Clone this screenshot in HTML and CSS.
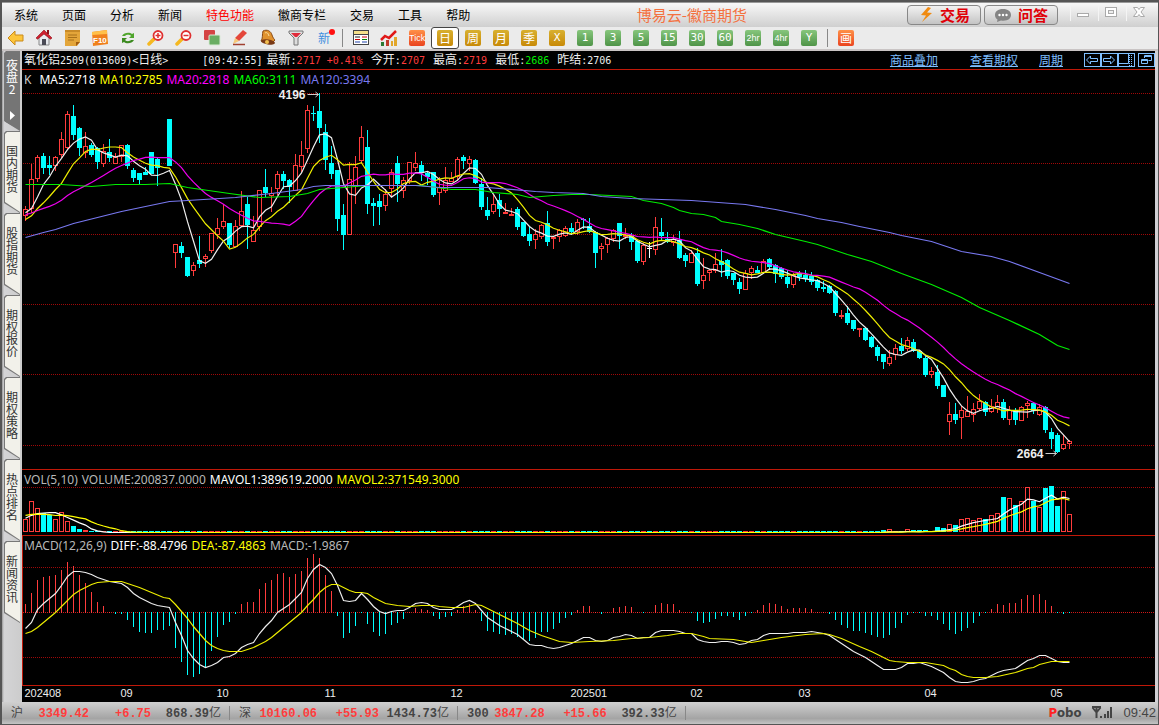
FILE: index.html
```html
<!DOCTYPE html>
<html lang="zh-CN">
    <head>
        <meta charset="utf-8">
        <title>博易云-徽商期货</title>
        <link rel="stylesheet" href="styles.css">
    </head>
    <body>
        <header class="titlebar">
            <nav class="menu">
                <button>系统</button>
                <button>页面</button>
                <button>分析</button>
                <button>新闻</button>
                <button class="hot">特色功能</button>
                <button>徽商专栏</button>
                <button>交易</button>
                <button>工具</button>
                <button>帮助</button>
            </nav>
            <h1>博易云-徽商期货</h1>
            <div class="title-right">
                <button class="pill">
                    <svg width="16" height="16" viewBox="0 0 16 16"><path d="M10 0L3 8l5 0.5L4 15l10-9-5-0.5L13 1z" fill="#f08a10"/></svg>
                    交易
                </button>
                <button class="pill">
                    <svg width="18" height="16" viewBox="0 0 18 16"><path d="M9 2C4 2 1 4.500 1 8c0 2 1 3.500 2.500 4.500L3 15l4-1.500c6 1 10-1.500 10-5.500 0-3.500-3-6-8-6z" fill="#858585"/><circle cx="5.500" cy="8" r="1.200" fill="#fff"/><circle cx="9" cy="8" r="1.200" fill="#fff"/><circle cx="12.500" cy="8" r="1.200" fill="#fff"/></svg>
                    问答
                </button>
                <button class="win" aria-label="最小化"><svg width="14" height="14"><rect x="1.500" y="8.500" width="11" height="3" fill="#fff" stroke="#aaa"/></svg></button>
                <button class="win" aria-label="最大化"><svg width="14" height="14"><rect x="1.500" y="2.500" width="11" height="9" fill="#fff" stroke="#aaa"/><rect x="4.500" y="5.500" width="5" height="3" fill="#eee" stroke="#aaa"/></svg></button>
                <button class="win" aria-label="关闭"><svg width="14" height="14"><path d="M1.500 2.500h4l1.500 2 1.500-2h4L9 7l3.500 4.500h-4L7 9.500l-1.500 2h-4L5 7z" fill="#fff" stroke="#aaa"/></svg></button>
            </div>
        </header>

        <div class="toolbar">
            <button aria-label="后退"><svg width="18" height="18" viewBox="0 0 18 18"><path d="M1 9l7-7v4h8v6H8v4z" fill="#fdc53a" stroke="#c98a1a"/></svg></button>
            <button aria-label="首页"><svg width="18" height="18" viewBox="0 0 18 18"><path d="M4 8v8h10V8L9 4z" fill="#e8eaee" stroke="#888"/><path d="M1 9L9 1l8 8-1.500 1.200L9 5l-6.500 5.200z" fill="#cf2030" stroke="#8f1018" stroke-width=".6"/><rect x="7" y="10" width="4" height="6" fill="#4a4a55"/><rect x="12" y="1" width="2" height="4" fill="#8f1018"/></svg></button>
            <button aria-label="公告"><svg width="18" height="18" viewBox="0 0 18 18"><path d="M2 1h15v12l-3 4H2z" fill="#e3a53a"/><path d="M2 2h15" stroke="#c88a28" stroke-width="2"/><path d="M5 6h9M5 8.500h9M5 11h6" stroke="#a8701a"/><path d="M13 17l4-4h-4z" fill="#a05c10"/></svg></button>
            <button aria-label="F10"><svg width="18" height="18" viewBox="0 0 18 18"><path d="M1 3l15-2 1 14-15 2z" fill="#f0801c"/><path d="M1 3l15-2v4L1 6z" fill="#ffc04a"/><text x="2" y="14" class="f10">F10</text></svg></button>
            <button aria-label="刷新"><svg width="18" height="18" viewBox="0 0 18 18"><path d="M3 7c2-4 8-4 10-2l2-1v5h-5l2-2c-2-2-5-1-6 0z" fill="#4fa52c"/><path d="M15 11c-2 4-8 4-10 2l-2 1V9h5l-2 2c2 2 5 1 6 0z" fill="#3c8a20"/></svg></button>
            <button aria-label="放大"><svg width="18" height="18" viewBox="0 0 18 18"><path d="M7 10l-5 5" stroke="#f5b820" stroke-width="3.500" stroke-linecap="round"/><circle cx="11" cy="6.500" r="4.500" fill="#fff" stroke="#df3030" stroke-width="1.800"/><path d="M8.500 6.500h5M11 4v5" stroke="#df3030" stroke-width="1.500"/></svg></button>
            <button aria-label="缩小"><svg width="18" height="18" viewBox="0 0 18 18"><path d="M7 10l-5 5" stroke="#f5b820" stroke-width="3.500" stroke-linecap="round"/><circle cx="11" cy="6.500" r="4.500" fill="#fff" stroke="#df3030" stroke-width="1.800"/><path d="M8.500 6.500h5" stroke="#df3030" stroke-width="1.500"/></svg></button>
            <button aria-label="叠加"><svg width="18" height="18" viewBox="0 0 18 18"><rect x="1" y="1" width="11" height="10" rx="1" fill="#d44444"/><rect x="6" y="6" width="11" height="10" rx="1" fill="#69ad62" stroke="#d8ead5"/></svg></button>
            <button aria-label="画线"><svg width="18" height="18" viewBox="0 0 18 18"><path d="M12 1l4 3-8 8-4-3z" fill="#e4463a"/><path d="M4 9l4 3-6 3z" fill="#f6c878"/><path d="M2 15.500h12" stroke="#a04030" stroke-width="1.500"/></svg></button>
            <button aria-label="预警"><svg width="18" height="18" viewBox="0 0 18 18"><path d="M4 2c4-2 8 0 9 4 1 3 2 4 3 5l-3 3L2 12c2-2 1-7 2-10z" fill="#e0922e" stroke="#8a4a14"/><ellipse cx="9" cy="13" rx="7" ry="2.500" transform="rotate(8 9 13)" fill="#7a3a16"/><circle cx="8" cy="13" r="2" fill="#f4c050"/><path d="M6 4c2-1 3 0 4 3" stroke="#fbe0a0" fill="none"/></svg></button>
            <button aria-label="筛选"><svg width="18" height="18" viewBox="0 0 18 18"><path d="M2 2h14v2l-5 5v7H7V9L2 4z" fill="#ddd" stroke="#777"/><path d="M4 4h10l-4 4H8z" fill="#e02a3a"/></svg></button>
            <button class="new">新<i></i></button>
            <span class="sep"></span>
            <button aria-label="报价表"><svg width="18" height="18" viewBox="0 0 18 18"><rect x="1.500" y="1.500" width="15" height="14" fill="#fff" stroke="#444"/><rect x="2" y="2" width="14" height="3" fill="#f5e08a"/><path d="M1 5.500h16" stroke="#444"/><path d="M3 8h5" stroke="#222"/><path d="M10 8h5" stroke="#c00"/><path d="M3 10.500h5" stroke="#c00"/><path d="M10 10.500h5" stroke="#080"/><path d="M3 13h5M10 13h5" stroke="#24a"/></svg></button>
            <button aria-label="走势图"><svg width="18" height="18" viewBox="0 0 18 18"><path d="M1 13h3v4H1z" fill="#2c7a34"/><path d="M6 11h3v6H6z" fill="#c03a2a"/><path d="M11 12h2v5h-2zM14 8h3v9h-3z" fill="#e2a72c"/><path d="M1 11l4-4 4 2 7-7" stroke="#e01818" stroke-width="2.500" fill="none"/></svg></button>
            <button><span class="chip orange small">Tick</span></button>
            <button class="on"><span class="chip gold">日</span></button>
            <button><span class="chip gold">周</span></button>
            <button><span class="chip gold">月</span></button>
            <button><span class="chip gold">季</span></button>
            <button><span class="chip gold num">X</span></button>
            <button><span class="chip green num">1</span></button>
            <button><span class="chip green num">3</span></button>
            <button><span class="chip green num">5</span></button>
            <button><span class="chip green num">15</span></button>
            <button><span class="chip green num">30</span></button>
            <button><span class="chip green num">60</span></button>
            <button><span class="chip green small">2hr</span></button>
            <button><span class="chip green small">4hr</span></button>
            <button><span class="chip green num">Y</span></button>
            <span class="sep"></span>
            <button><span class="chip orange">画</span></button>
        </div>

        <div class="main">
            <nav class="tabs">
                <button class="tab active"><span>夜盘2</span><svg width="5" height="9"><path d="M0 0l5 4.500L0 9z" fill="#fff"/></svg></button>
                <button class="tab"><span>国内期货</span></button>
                <button class="tab"><span>股指期货</span></button>
                <button class="tab"><span>期权报价</span></button>
                <button class="tab"><span>期权策略</span></button>
                <button class="tab"><span>热点排名</span></button>
                <button class="tab"><span>新闻资讯</span></button>
            </nav>

            <main class="panel">
                <div class="quote">
                    <span class="name">氧化铝<b>2509(013609)&lt;</b>日线<b>&gt;</b></span>
                    <span><b>[09:42:55]</b></span>
                    <span>最新<b>:</b><b class="up">2717 +0.41%</b></span>
                    <span>今开<b>:</b><b class="up">2707</b></span>
                    <span>最高<b>:</b><b class="up">2719</b></span>
                    <span>最低<b>:</b><b class="down">2686</b></span>
                    <span>昨结<b>:</b><b>2706</b></span>
                    <div class="links">
                        <a href="#overlay">商品叠加</a>
                        <a href="#options">查看期权</a>
                        <a href="#period">周期</a>
                        <div class="tools">
                            <button aria-label="向左"><svg width="14" height="12"><path d="M1.500 6l4-4v2.500h7v3h-7V10z"/></svg></button>
                            <button aria-label="向右"><svg width="14" height="12"><path d="M12.500 6l-4-4v2.500h-7v3h7V10z"/></svg></button>
                            <button aria-label="侧栏"><svg width="14" height="12"><path d="M0 9.500h9.500V0"/><path d="M12.500 1v11M10.500 1v11" stroke-dasharray="1 1"/></svg></button>
                            <button class="restore" aria-label="还原"><svg width="14" height="12"><path d="M5.500 4V1.500h7v5h-3M5 2.500h8"/><path d="M2.500 5.500h6v4h-6zM2 6.500h7"/></svg></button>
                        </div>
                    </div>
                </div>

                <section class="pane">
                    <div class="legend">
                        <span class="c-k">K</span>
                        <span class="c-white">MA5:2718</span>
                        <span class="c-yellow">MA10:2785</span>
                        <span class="c-magenta">MA20:2818</span>
                        <span class="c-green">MA60:3111</span>
                        <span class="c-blue">MA120:3394</span>
                    </div>
                    <svg id="price" class="chart price"></svg>
                </section>
                <section class="pane">
                    <div class="legend vol">
                        <span class="c-grey">VOL(5,10)</span>
                        <span class="c-grey">VOLUME:200837.0000</span>
                        <span class="c-white">MAVOL1:389619.2000</span>
                        <span class="c-yellow">MAVOL2:371549.3000</span>
                    </div>
                    <svg id="volume" class="chart volume"></svg>
                </section>
                <section class="pane selected">
                    <div class="legend">
                        <span class="c-grey">MACD(12,26,9)</span>
                        <span class="c-white">DIFF:-88.4796</span>
                        <span class="c-yellow">DEA:-87.4863</span>
                        <span class="c-grey">MACD:-1.9867</span>
                    </div>
                    <svg id="macd" class="chart macd"></svg>
                </section>
                <svg id="axis" class="axis"></svg>
            </main>
        </div>

        <footer class="status">
            <div class="index">
                <span>沪</span><b class="up last">3349.42</b><b class="up diff">+6.75</b><b class="amount">868.39<i>亿</i></b>
            </div>
            <div class="index">
                <span>深</span><b class="up last">10160.06</b><b class="up diff">+55.93</b><b class="amount">1434.73<i>亿</i></b>
            </div>
            <div class="index">
                <b>300</b><b class="up last">3847.28</b><b class="up diff">+15.66</b><b class="amount">392.33<i>亿</i></b>
            </div>
            <div class="conn">
                <strong><em>P</em>obo</strong>
                <svg width="22" height="14"><path d="M1 1h9M1.500 1.500l4 5 4-5M5.500 1v11" fill="none" stroke="#444" stroke-width="2"/><path d="M9 10h2v2H9zM13 8h2v4h-2zM16 5h2v7h-2zM19 1h2v11h-2z" fill="#444"/></svg>
                <time>09:42</time>
            </div>
        </footer>
        <script src="chart.js"></script>
    </body>
</html>
```
FILE: styles.css
```css
:root {
    --line: #c01808;
    --up: #ff3c3c;
    --down: #00ffff;
    --link: #7fbfff;
}
* {
    box-sizing: border-box;
}
body {
    margin: 0;
    min-height: 100vh;
    display: flex;
    flex-direction: column;
    border: 2px solid #555;
    border-width: 2px 1px 2px 2px;
    background: #d0d0d4;
    font: 12px/16px "Liberation Sans", "Noto Sans CJK SC", sans-serif;
    color: #000;
}
button {
    border: 0;
    padding: 0;
    background: none;
    font: inherit;
    color: inherit;
}
svg {
    display: block;
    flex: none;
}

/* title bar */
.titlebar {
    display: flex;
    align-items: center;
    height: 25px;
    border-top: 1px solid #999;
    background: linear-gradient(#f8f8f8, #cfcfcf);
}
.menu {
    display: flex;
    flex: 1;
    gap: 24px;
    padding-left: 12px;
    font-family: "Noto Sans CJK SC", sans-serif;
    white-space: nowrap;
}
.menu .hot {
    color: #f00;
}
.titlebar h1 {
    margin: 0;
    font: 15px/20px "Noto Sans CJK SC", sans-serif;
    color: #f4713f;
    white-space: nowrap;
}
.title-right {
    display: flex;
    gap: 3px;
    padding-left: 160px;
    padding-right: 7px;
}
.pill {
    display: flex;
    align-items: center;
    justify-content: center;
    gap: 6px;
    width: 74px;
    height: 20px;
    border: 1px solid #888;
    border-radius: 4px;
    background: linear-gradient(#f2f2f2, #c4c4c4);
    font: bold 15px/18px "Noto Sans CJK SC", sans-serif;
    color: #e00008;
    white-space: nowrap;
}
.win {
    width: 25px;
    height: 16px;
    display: flex;
    justify-content: center;
    border-left: 1px solid #f4f4f4;
}
.pill + .win {
    margin-left: 9px;
}

/* toolbar */
.toolbar {
    display: flex;
    align-items: center;
    height: 22px;
    background: #ebebeb;
}
.toolbar button {
    width: 28px;
    height: 22px;
    display: flex;
    align-items: center;
    justify-content: center;
}
.toolbar .on {
    border: 1px solid #444;
    border-radius: 3px;
    background: #fff;
}
.sep {
    width: 1px;
    height: 18px;
    margin: 0 4px;
    background: #888;
}
.new {
    position: relative;
    font-family: "Noto Sans CJK SC", sans-serif;
    color: #3f8fe0;
}
.new i {
    position: absolute;
    right: 3px;
    top: 2px;
    width: 6px;
    height: 6px;
    border-radius: 50%;
    background: #ff1010;
}
.f10 {
    font: bold 8px "Liberation Sans", sans-serif;
    fill: #fff;
}
.chip {
    width: 16px;
    height: 16px;
    border-radius: 2px;
    font: 12px/16px "Noto Sans CJK SC", sans-serif;
    color: #fff;
    text-align: center;
}
.chip.num {
    font: 11px/16px "DejaVu Sans Mono", monospace;
}
.chip.small {
    font: 9px/16px "Liberation Sans", sans-serif;
}
.gold {
    background: linear-gradient(#d8b030, #c88a08);
}
.green {
    background: linear-gradient(#86c67c, #4f9448);
}
.orange {
    background: linear-gradient(#ff9048, #ea4420);
}

/* side tabs */
.main {
    flex: 1;
    display: flex;
    border-top: 2px solid #c9c4c4;
}
.tabs {
    width: 20px;
    padding-left: 2px;
    padding-right: 2px;
    display: flex;
    flex-direction: column;
    background: linear-gradient(90deg, #999, #d4d4d6 2px, #ccc);
}
.tab {
    position: relative;
    z-index: 0;
    height: 82px;
    padding-top: 14px;
    display: flex;
    flex-direction: column;
    align-items: center;
    background: #777;
    clip-path: polygon(0 2px, 2px 0, 100% 0, 100% 100%, 0 72px);
    font: 12px/12px "Noto Sans CJK SC", sans-serif;
    color: #333;
}
.tab::before {
    content: "";
    position: absolute;
    z-index: -1;
    inset: 1px 0 1px 1px;
    background: #f2f1ea;
    clip-path: polygon(0 2px, 2px 0, 100% 0, 100% 100%, 0 70px);
}
.tab span {
    width: 12px;
    word-break: break-all;
}
.tab.active {
    height: 80px;
    padding-top: 8px;
    gap: 16px;
    color: #fff;
    clip-path: polygon(0 2px, 2px 0, 100% 0, 100% 100%, 0 70px);
}
.tab.active::before {
    background: #757575;
}

/* chart panel */
.panel {
    flex: 1;
    min-width: 0;
    margin-right: 3px;
    background: #000;
    color: #eee;
}
.quote {
    display: flex;
    align-items: center;
    gap: 8px;
    height: 19px;
    padding-left: 2px;
    border-bottom: 1px solid var(--line);
    font-family: "Noto Sans CJK SC", sans-serif;
    white-space: nowrap;
}
.quote b {
    font: 10px/16px "DejaVu Sans Mono", monospace;
}
.quote .name {
    margin-right: 26px;
}
.quote .name + span {
    margin-right: -4px;
}
.up, .quote .up {
    color: var(--up);
}
.quote .down {
    color: #00f000;
}
.links {
    display: flex;
    gap: 21px;
    margin-left: auto;
}
.links a {
    color: var(--link);
}
.links a:first-child {
    margin-right: 11px;
}
.tools {
    display: flex;
    align-items: center;
}
.tools button {
    border: 1px solid var(--link);
    width: 17px;
    height: 14px;
}
.tools svg {
    fill: none;
    stroke: var(--link);
}
.tools .restore {
    margin-left: 3px;
}
.pane {
    border-bottom: 1px solid var(--line);
}
.pane.selected {
    box-shadow: inset 1px 0 var(--line);
}
.legend {
    display: flex;
    gap: 4px;
    height: 18px;
    padding-left: 2px;
    font: 12px/20px "Noto Sans", sans-serif;
    white-space: nowrap;
}
.legend.vol {
    height: 16px;
}
.c-k {
    color: #ccc;
    margin-right: 4px;
}
.c-grey {
    color: #b8b8b8;
}
.c-white {
    color: #fff;
}
.c-yellow {
    color: #ff0;
}
.c-magenta {
    color: #f0f;
}
.c-green {
    color: #0f0;
}
.c-blue {
    color: #7878f0;
}
.chart, .axis {
    width: 100%;
}
.price {
    height: 381px;
}
.volume {
    height: 49px;
}
.macd {
    height: 131px;
}
.axis {
    height: 16px;
}
.axis text {
    font: 11px "Liberation Sans", sans-serif;
    fill: #eee;
}
.mark {
    font: bold 12px "Liberation Sans", sans-serif;
    fill: #eee;
}

/* status bar */
.status {
    display: flex;
    align-items: center;
    height: 22px;
    padding: 0 2px 0 9px;
    background: linear-gradient(#d0d0d0, #a4a4a4 75%, #c4c4c4);
    color: #444;
    font: 12px/18px "Noto Sans CJK SC", sans-serif;
    white-space: nowrap;
}
.index {
    display: flex;
    align-items: baseline;
    padding-right: 8px;
    margin-right: 9px;
    border-right: 1px solid #888;
    line-height: 12px;
}
.index b {
    font: bold 12px/12px "Liberation Mono", monospace;
}
.index i {
    font: 12px/12px "Noto Sans CJK SC", sans-serif;
}
.index .last {
    min-width: 66px;
    text-align: right;
}
.index b + .last {
    min-width: 56px;
}
.index .diff {
    min-width: 62px;
    text-align: right;
}
.index .amount {
    min-width: 70px;
    text-align: right;
}
.conn {
    display: flex;
    align-items: center;
    gap: 10px;
    margin-left: auto;
}
.conn strong {
    font: bold 13px/18px "DejaVu Sans Condensed", "DejaVu Sans", sans-serif;
}
.conn em {
    font-style: normal;
    color: #f22;
}
.conn time {
    font: 13px/18px "Liberation Sans", sans-serif;
}
```
FILE: chart.js
```js
const STEP = 6;
const UP = '#ff3c3c';
const DOWN = '#00ffff';

// high, body top, body bottom, low, direction (u = up, d = down, w = flat, x = no trade)
const candles = `
206 209 216 221 u|164 179 209 213 u|155 157 179 182 u|153 156 168 174 d|156 165 168 175 d|156 157 166 171 u
132 139 155 158 u|111 114 148 149 u|105 116 135 140 d|127 128 148 156 d|132 146 153 158 u|143 145 155 157 d
147 148 162 169 d|144 151 164 167 u|139 152 158 162 d|153 157 164 164 u|145 145 157 162 u|144 145 166 169 d
168 170 178 182 d|173 173 180 184 d|167 172 175 175 d|152 152 174 174 d|158 159 168 186 d|167 167 167 167 x
119 119 166 166 d|244 244 253 268 u|242 246 253 258 d|257 257 276 277 d|262 265 271 276 u|236 260 264 268 d
254 256 259 267 u|233 233 251 253 u|218 228 235 239 u|204 221 227 229 u|223 223 245 248 d|220 226 247 247 u
191 211 226 226 u|197 204 225 249 d|216 230 242 242 u|190 190 227 231 u|169 187 193 197 d|187 193 196 212 u
171 174 189 195 u|171 174 181 189 d|179 180 187 203 d|154 165 191 191 u|141 155 167 172 u|105 110 149 153 u
106 113 114 121 d|93 111 128 143 d|124 132 160 170 d|146 163 174 179 d|170 170 219 231 d|204 215 235 250 d
162 179 235 235 u|156 167 187 204 u|126 137 161 163 u|130 147 204 214 d|198 203 206 226 d|194 201 207 225 d
189 194 206 211 u|169 172 189 197 u|156 163 184 202 d|177 180 191 198 u|162 162 181 184 u|152 163 168 171 u
161 165 173 181 d|171 173 177 185 d|172 172 195 197 d|177 187 193 205 u|167 180 191 193 u|172 178 182 182 u
157 159 177 180 u|155 157 161 169 d|156 159 164 171 u|159 160 183 184 d|178 184 207 210 d|197 210 216 220 d
195 204 212 214 u|194 200 209 217 d|203 212 214 214 u|208 214 216 216 u|207 209 227 230 d|222 222 236 237 d
227 234 241 246 d|229 234 240 249 u|224 225 237 239 u|211 223 242 246 d|237 237 239 249 u|229 230 237 242 u
226 228 236 237 u|223 228 232 235 d|219 222 232 235 u|218 219 220 229 d|218 226 232 233 d|231 232 253 268 d
243 246 249 260 u|237 238 245 253 u|229 230 239 242 u|223 223 236 249 d|228 235 237 239 u|233 236 242 250 d
240 241 261 263 d|243 245 262 265 u|242 248 249 258 w|217 227 250 255 u|218 232 236 240 d|232 239 242 243 d
235 239 243 246 u|231 240 258 259 d|253 255 261 267 d|250 253 263 263 u|248 253 284 286 d|258 275 281 289 u
269 270 273 281 u|253 264 271 273 u|249 261 265 277 d|259 260 276 279 d|273 273 280 285 d|278 282 289 294 d
270 273 290 290 u|266 268 273 279 u|266 270 273 273 d|259 261 273 273 u|258 259 267 270 d|264 265 274 283 d
267 268 277 279 d|270 277 284 288 d|273 275 285 288 u|271 273 277 281 d|270 275 279 282 d|272 276 282 285 d
279 280 288 291 d|281 287 289 292 d|285 286 293 294 d|290 291 313 316 d|310 315 317 319 u|306 313 323 325 d
320 320 329 331 d|328 328 330 337 u|327 328 340 341 d|336 337 347 348 d|345 347 356 361 d|354 354 362 369 d
350 357 364 366 u|344 348 355 360 u|338 346 351 354 d|337 340 349 351 u|339 342 351 352 d|350 351 358 359 d
356 358 375 377 d|367 371 375 378 u|365 372 386 389 d|385 385 397 397 d|402 414 422 435 u|403 414 420 424 d
406 410 418 439 u|396 411 417 417 u|403 409 415 422 u|394 401 409 411 u|401 402 412 416 d|399 406 412 413 u
395 402 409 413 u|399 402 418 420 d|406 410 420 425 u|408 410 420 425 d|406 407 421 421 u|401 403 406 418 u
402 403 411 414 d|404 407 415 416 u|406 407 430 433 d|428 432 439 449 d|433 435 452 453 d|435 444 449 450 u
440 441 444 449 u`.trim().split(/[|\n]/).map(row => {
    const p = row.split(' ');
    return { high: +p[0], top: +p[1], bottom: +p[2], low: +p[3], dir: p[4] };
});
const earlierCloses = [209, 209, 209, 209, 209, 209, 209, 209, 209, 209, 217, 230, 225, 231, 227, 200, 214, 231, 207];

const volStart = [13, 31, 24, 19, 17, 13, 20, 11, 6, 3, 2];
const volEnd = [2, 3, 1, 1, 3, 2, 2, 2, 1, 5, 4, 8, 7, 13, 14, 12, 14, 13, 17, 19, 35, 34, 27, 31, 45, 31, 25, 44, 46, 26, 41, 18];
const earlierVols = [21, 21, 21, 21, 21, 16, 16, 16, 15];

const hist = [
    604, 593, 580, 577, 576, 575, 570, 562, 566, 575, 583, 592, 602, 606, 612, 614, 614, 620, 627, 632, 633, 633, 630, 630, 626,
    648, 662, 675, 677, 674, 667, 651, 637, 625, 622, 614, 604, 602, 602, 589, 583, 580, 574, 573, 577, 574, 571, 558, 554, 558,
    575, 591, 616, 638, 633, 626, 613, 624, 632, 636, 634, 625, 623, 619, 612, 608, 609, 610, 616, 619, 617, 616, 610, 606, 604,
    610, 621, 631, 632, 634, 635, 634, 637, 639, 641, 638, 632, 632, 629, 623, 618, 615, 610, 606, 606, 612, 614, 612, 608, 607,
    606, 607, 612, 613, 612, 605, 603, 604, 604, 610, 612, 613, 621, 623, 622, 619, 616, 616, 617, 620, 616, 613, 610, 605, 603,
    604, 606, 609, 608, 608, 608, 609, 612, 612, 614, 620, 625, 628, 631, 631, 633, 635, 637, 638, 635, 628, 623, 615, 613, 613,
    616, 616, 620, 624, 630, 634, 631, 628, 623, 616, 613, 609, 604, 605, 603, 603, 599, 595, 595, 594, 600, 606, 613, 614, 613
];
const diff = [
    628, 622, 609, 603, 598, 593, 585, 576, 571, 571, 572, 574, 577, 579, 581, 582, 583, 587, 593, 597, 600, 603, 605, 606, 607,
    622, 635, 650, 658, 664, 667, 665, 662, 657, 656, 653, 647, 644, 642, 633, 626, 620, 612, 608, 604, 598, 592, 578, 569, 564,
    567, 573, 585, 600, 601, 600, 593, 599, 606, 611, 613, 611, 610, 610, 607, 603, 602, 603, 607, 609, 609, 609, 606, 602, 600,
    603, 610, 617, 621, 625, 628, 631, 634, 639, 644, 645, 645, 647, 648, 647, 645, 643, 640, 637, 637, 640, 641, 640, 637, 636,
    634, 635, 638, 637, 637, 632, 630, 630, 630, 631, 633, 633, 639, 641, 642, 642, 641, 641, 642, 644, 643, 640, 639, 635, 633,
    633, 633, 633, 632, 632, 632, 631, 632, 633, 635, 639, 643, 647, 651, 654, 657, 661, 665, 669, 669, 669, 667, 663, 663, 662,
    664, 666, 669, 672, 677, 681, 682, 682, 681, 679, 678, 675, 672, 670, 669, 668, 664, 660, 658, 655, 655, 658, 661, 662, 662
];
// bar number and level, joined by straight lines
const dea = '0,633 1,631 2,627 3,622 5,612 6,606 7,600 8,594 9,590 10,587 11,584 12,582 14,581 16,581 17,583 19,587 21,592 23,597 24,598 25,604 26,611 27,618 28,626 29,633 30,640 31,645 32,648 33,650 34,651 36,651 38,647 39,644 40,641 41,637 42,632 44,622 46,612 47,605 48,599 49,592 50,587 51,584 52,584 53,587 54,590 55,592 56,592 57,593 58,597 60,603 62,605 64,606 66,605 68,605 69,606 71,607 73,607 75,604 76,605 77,608 79,614 82,623 84,630 86,635 88,639 89,641 91,642 94,641 98,640 101,638 104,637 107,635 109,633 111,633 113,636 114,638 118,639 120,641 121,642 123,640 126,637 130,634 133,633 134,634 136,638 139,646 141,651 143,657 144,660 145,661 147,662 150,662 152,664 153,665 154,668 155,670 156,674 157,676 158,677 160,677 162,676 165,672 167,668 168,667 169,664 171,661 174,661';
const ma60 = '0,184 6,184 11,186 15,184 20,184 24,183 27,187 34,193 39,197 44,196 47,193 49,189 53,187 57,185 66,185 71,189 75,189 78,192 82,194 84,197 88,195 91,194 94,194 101,196 103,200 106,203 108,207 109,210 111,213 113,214 115,217 116,221 119,224 122,228 125,234 130,241 132,244 134,248 137,254 141,261 146,273 151,284 156,297 159,307 164,320 169,334 172,345 174,349';
const ma120 = '0,237 3,232 5,229 8,223 12,217 16,211 20,206 24,201 27,200 35,197 41,193 46,189 48,186 50,185 65,185 69,187 77,187 85,191 88,192 93,193 96,196 101,198 106,199 111,200 120,204 125,209 130,215 132,218 136,222 139,226 144,232 146,235 151,241 156,251 161,256 164,261 169,272 174,283';

const months = [[0, '202408'], [16, '09'], [32, '10'], [50, '11'], [71, '12'], [91, '202501'], [111, '02'], [129, '03'], [150, '04'], [171, '05']];

function barX(i) {
    return 3.5 + i * STEP;
}
function add(svg, name, attrs, text) {
    const el = document.createElementNS('http://www.w3.org/2000/svg', name);
    for (const key in attrs) {
        el.setAttribute(key, attrs[key]);
    }
    if (text) {
        el.textContent = text;
    }
    svg.appendChild(el);
}
function grid(svg, levels, top, color) {
    levels.forEach(y => add(svg, 'line', {
        x1: 1, x2: '100%', y1: y - top + 0.5, y2: y - top + 0.5,
        stroke: color, 'stroke-dasharray': '1 1', 'shape-rendering': 'crispEdges'
    }));
}
function vline(svg, x, y1, y2, color) {
    add(svg, 'line', { x1: x, x2: x, y1: y1, y2: y2, stroke: color, 'shape-rendering': 'crispEdges' });
}
function polyline(svg, points, top, color) {
    const list = points.map(p => barX(p[0]) + ',' + (p[1] - top + 0.5)).join(' ');
    add(svg, 'polyline', { points: list, fill: 'none', stroke: color, 'stroke-width': 1.2 });
}
function parsePoints(s) {
    return s.split(' ').map(p => p.split(',').map(Number));
}
function average(values, earlier, n) {
    const all = earlier.concat(values);
    return values.map((v, i) => {
        const end = i + earlier.length + 1;
        return [i, all.slice(end - n, end).reduce((a, b) => a + b, 0) / n];
    });
}
function box(svg, x, top, bottom, up) {
    if (up) {
        add(svg, 'rect', { x: x - 2, y: top + 0.5, width: 4, height: Math.max(bottom - top - 1, 1), fill: '#000', stroke: UP, 'shape-rendering': 'crispEdges' });
    } else {
        add(svg, 'rect', { x: x - 2.5, y: top, width: 5, height: Math.max(bottom - top, 1), fill: DOWN, 'shape-rendering': 'crispEdges' });
    }
}

function drawPrice() {
    const svg = document.getElementById('price');
    const top = 88;
    grid(svg, [93, 163, 234, 304, 374, 445], top, '#a00808');
    candles.forEach((c, i) => {
        if (c.dir == 'x') {
            return;
        }
        const x = barX(i);
        const color = { u: UP, d: DOWN, w: '#fff' }[c.dir];
        vline(svg, x, c.high - top, c.low - top, color);
        if (c.dir == 'w') {
            add(svg, 'rect', { x: x - 2.5, y: c.top - top, width: 5, height: 1, fill: '#fff' });
        } else {
            box(svg, x, c.top - top, c.bottom - top, c.dir == 'u');
        }
    });
    const closes = candles.map(c => c.dir == 'u' ? c.top : c.bottom);
    polyline(svg, average(closes, earlierCloses, 5), top, '#eee');
    polyline(svg, average(closes, earlierCloses, 10), top, '#ee0');
    polyline(svg, average(closes, earlierCloses, 20), top, '#e0e');
    polyline(svg, parsePoints(ma60), top, '#0e0');
    polyline(svg, parsePoints(ma120), top, '#7878f0');

    mark(svg, barX(49), 95 - top, '4196');
    mark(svg, barX(172), 454 - top, '2664');
}
function mark(svg, x, y, text) {
    add(svg, 'text', { x: x - 14, y: y + 4, class: 'mark', 'text-anchor': 'end' }, text);
    add(svg, 'path', { d: `M${x - 12} ${y - 0.5}h11m-3 -2.500l3 2.500l-3 2.500`, fill: 'none', stroke: '#ccc' });
}

function drawVolume() {
    const svg = document.getElementById('volume');
    const top = 486;
    const base = 532;
    grid(svg, [487], top, '#a00808');
    const middle = new Array(candles.length - volStart.length - volEnd.length).fill(1);
    const vols = volStart.concat(middle, volEnd);
    vols.forEach((v, i) => {
        const up = candles[i].dir == 'u';
        if (v < 3) {
            add(svg, 'rect', { x: barX(i) - 2.5, y: base - v - top, width: 5, height: v, fill: up ? UP : DOWN, 'shape-rendering': 'crispEdges' });
        } else {
            box(svg, barX(i), base - v - top, base - top, up);
        }
    });
    const toLevel = p => [p[0], base + 1 - p[1]];
    polyline(svg, average(vols, earlierVols, 5).map(toLevel), top, '#fff');
    polyline(svg, average(vols, earlierVols, 10).map(toLevel), top, '#ff0');
}

function drawMacd() {
    const svg = document.getElementById('macd');
    const top = 554;
    const zero = 612;
    grid(svg, [567, 657], top, '#a00808');
    grid(svg, [zero], top, '#d01818');
    hist.forEach((y, i) => {
        const up = y <= zero;
        vline(svg, barX(i), (up ? y : zero) - top, (up ? zero + 1 : y) - top, up ? UP : DOWN);
    });
    polyline(svg, diff.map((y, i) => [i, y]), top, '#eee');
    polyline(svg, parsePoints(dea), top, '#ee0');
}

function drawAxis() {
    const svg = document.getElementById('axis');
    months.forEach(m => add(svg, 'text', { x: barX(m[0]) - 1, y: 11 }, m[1]));
}

drawPrice();
drawVolume();
drawMacd();
drawAxis();
```
